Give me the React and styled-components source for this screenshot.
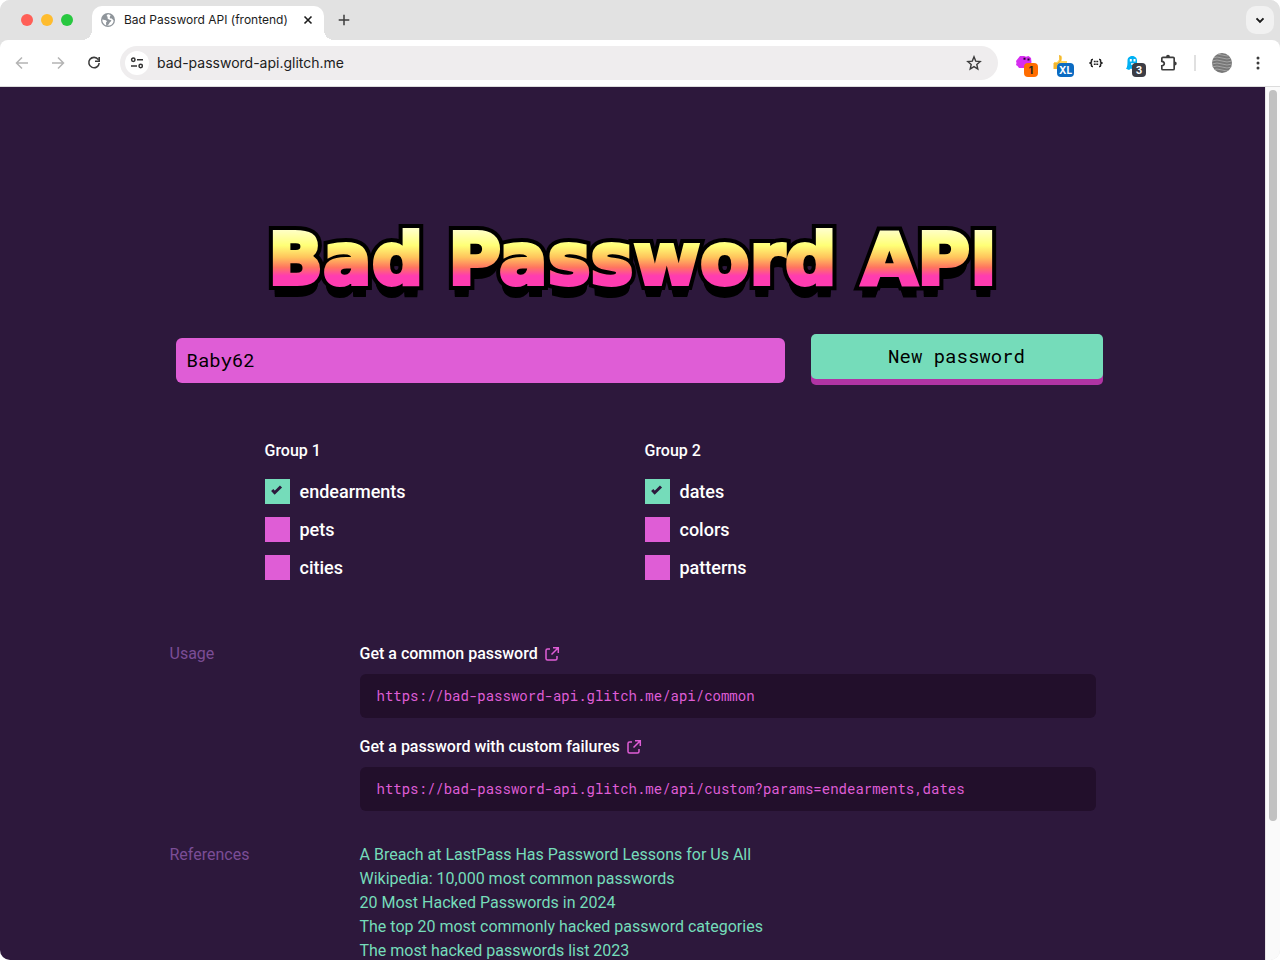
import React, { useState } from "react";
import styled, { createGlobalStyle } from "styled-components";

const color = {
  night: "#2d183c",
  pink: "#df5dd6",
  plum: "#b034a4",
  mint: "#75dcba",
  violet: "#7b4d96",
  code: "#220f2b",
};
const mono = '"Roboto Mono", "DejaVu Sans Mono", monospace';

const GlobalStyle = createGlobalStyle`
  * { box-sizing: border-box; }
  body { margin: 0; background: #fff; font-family: Roboto, sans-serif; }
  button, input { font: inherit; }
`;

const Window = styled.div`
  height: 100vh;
  display: flex;
  flex-direction: column;
  overflow: hidden;
  border-radius: 10px;
  background: #e2e2e2;
`;

const TabStrip = styled.div`
  height: 40px;
  flex: none;
  display: flex;
  align-items: center;
  padding: 0 6px 0 21px;
  background: #e2e2e2;
  font-family: Inter, sans-serif;
`;
const Lights = styled.div`
  display: flex;
  gap: 8px;
  margin-right: 19px;
`;
const Light = styled.span`
  width: 12px;
  height: 12px;
  border-radius: 50%;
  background: ${(p) => p.$tone};
`;
const Tab = styled.div`
  position: relative;
  align-self: flex-end;
  width: 232px;
  height: 34px;
  display: flex;
  align-items: center;
  padding: 0 8px 6px 9px;
  border-radius: 10px 10px 0 0;
  background: #fff;
  &::before,
  &::after {
    content: "";
    position: absolute;
    bottom: 0;
    width: 10px;
    height: 10px;
  }
  &::before {
    right: 100%;
    background: radial-gradient(circle at 0 0, transparent 10px, #fff 10px);
  }
  &::after {
    left: 100%;
    background: radial-gradient(circle at 100% 0, transparent 10px, #fff 10px);
  }
`;
const TabTitle = styled.span`
  flex: 1;
  margin-left: 9px;
  font-size: 12px;
  line-height: 16px;
  white-space: nowrap;
  color: #1c1c1c;
`;
const IconButton = styled.button`
  width: ${(p) => p.$w || 36}px;
  height: ${(p) => p.$h || 28}px;
  flex: none;
  display: grid;
  place-items: center;
  padding: 0;
  border: 0;
  border-radius: 10px;
  background: ${(p) => p.$bg || "transparent"};
  color: ${(p) => p.$ink || "#3c3c3c"};
`;
const Spacer = styled.div`
  flex: 1;
`;

const Toolbar = styled.div`
  height: 47px;
  flex: none;
  display: flex;
  align-items: center;
  padding: 0 4px;
  border-radius: 8px 8px 0 0;
  border-bottom: 1px solid #dcdcdc;
  background: #fff;
`;
const AddressBar = styled.div`
  flex: 1;
  min-width: 0;
  height: 34px;
  display: flex;
  align-items: center;
  margin: 0 8px;
  padding: 0 10px 0 5px;
  border-radius: 17px;
  background: #efedee;
`;
const SiteButton = styled(IconButton)`
  border-radius: 50%;
`;
const Address = styled.input`
  flex: 1;
  min-width: 0;
  margin-left: 8px;
  padding: 0;
  border: 0;
  outline: 0;
  background: none;
  font-family: Inter, sans-serif;
  font-size: 14px;
  line-height: 20px;
  color: #202020;
`;
const Extension = styled(IconButton)`
  position: relative;
`;
const Badge = styled.span`
  position: absolute;
  top: 14px;
  left: ${(p) => (p.$wide ? 15 : 18)}px;
  min-width: 14px;
  height: 14px;
  padding: 0 2px;
  border-radius: 4px;
  background: ${(p) => p.$bg};
  color: ${(p) => p.$ink || "#fff"};
  font-family: Inter, sans-serif;
  font-size: 10px;
  font-weight: 700;
  line-height: 14px;
  text-align: center;
`;
const Divider = styled.span`
  width: 2px;
  height: 16px;
  margin: 0 8px;
  background: #e0e0e0;
`;

const Viewport = styled.div`
  flex: 1;
  min-height: 0;
  display: flex;
`;
const Page = styled.div`
  flex: 1;
  min-width: 0;
  overflow: hidden;
  background: ${color.night};
  color: #fff;
`;
const ScrollTrack = styled.div`
  width: 15px;
  flex: none;
  padding: 3px 3px 0;
  border-left: 1px solid #e8e8e8;
  background: #fafafa;
`;
const ScrollThumb = styled.div`
  height: 84%;
  border-radius: 4px;
  background: #c1c1c1;
`;

const Main = styled.main`
  max-width: 926px;
  margin: 0 auto;
  padding-top: 130px;
`;
const Title = styled.h1`
  position: relative;
  z-index: 0;
  margin: 0;
  font-family: "DejaVu Sans", sans-serif;
  font-size: 72px;
  font-weight: 700;
  line-height: 84px;
  text-align: center;
  white-space: nowrap;
  &::before {
    content: attr(data-text);
    position: absolute;
    inset: 0;
    z-index: -1;
    color: #000;
    -webkit-text-stroke: 12px #000;
    text-shadow: 0 2px #000, 0 4px #000, 0 6px #000, 0 8px #000, 0 10px #000,
      0 12px #000, 0 13px #000;
  }
`;
const TitleFill = styled.span`
  background: linear-gradient(#ffffc4 16%, #ffff76 34%, #ffc45c 48%, #ff7560 60%, #ff3cb0 70%);
  -webkit-background-clip: text;
  background-clip: text;
  -webkit-text-stroke: 4px transparent;
  color: transparent;
`;

const Form = styled.form`
  display: grid;
  grid-template-columns: 609fr 292fr;
  column-gap: 26px;
  align-items: start;
  margin: 33px -7px 0 6px;
`;
const PasswordField = styled.input`
  min-width: 0;
  height: 45px;
  margin-top: 4px;
  padding: 0 11px 2px;
  border: 0;
  border-radius: 6px;
  background: ${color.pink};
  color: #000;
  font-family: ${mono};
  font-size: 19px;
`;
const NewButton = styled.button`
  height: 45px;
  padding: 0 0 2px;
  border: 0;
  border-radius: 5px;
  background: ${color.mint};
  box-shadow: 0 6px ${color.plum};
  color: #000;
  font-family: ${mono};
  font-size: 19px;
`;

const Groups = styled.div`
  display: grid;
  grid-template-columns: 1fr 1fr;
  margin: 56px 71px 0 95px;
`;
const Group = styled.fieldset`
  min-width: 0;
  display: flex;
  flex-direction: column;
  gap: 13px;
  margin: 0;
  padding: 0;
  border: 0;
`;
const Legend = styled.legend`
  margin-bottom: 16px;
  padding: 0;
  font-size: 16px;
  font-weight: 500;
  line-height: 24px;
`;
const Option = styled.label`
  display: flex;
  align-items: center;
  gap: 10px;
  font-size: 18px;
  font-weight: 500;
  line-height: 25px;
`;
const BoxWrap = styled.span`
  display: grid;
  > * {
    grid-area: 1 / 1;
  }
  svg {
    margin: 6px;
    pointer-events: none;
  }
`;
const Box = styled.input`
  appearance: none;
  width: 25px;
  height: 25px;
  margin: 0;
  background: ${color.pink};
  &:checked {
    background: ${color.mint};
  }
`;

const Section = styled.section`
  display: grid;
  grid-template-columns: 190px minmax(0, 1fr);
  margin-top: ${(p) => p.$top}px;
  font-size: 16px;
  line-height: 24px;
`;
const SectionTitle = styled.h2`
  margin: 0;
  font-size: 16px;
  font-weight: 400;
  color: ${color.violet};
`;
const Example = styled.div`
  & + & {
    margin-top: 17px;
  }
`;
const ExampleTitle = styled.h3`
  display: flex;
  align-items: center;
  gap: 6px;
  margin: 0;
  font-size: 16px;
  font-weight: 500;
  line-height: 24px;
`;
const OpenLink = styled.a`
  display: flex;
  color: ${color.pink};
`;
const Code = styled.code`
  display: block;
  margin-top: 8px;
  padding: 10px 17px;
  border-radius: 6px;
  background: ${color.code};
  color: ${color.pink};
  font-family: ${mono};
  font-size: 14px;
  line-height: 24px;
`;
const Links = styled.ul`
  margin: 0;
  padding: 0 0 32px;
  list-style: none;
`;
const RefLink = styled.a`
  color: ${color.mint};
  text-decoration: none;
`;

const Stroke = ({ d, size = 16, w = 2 }) => (
  <svg width={size} height={size} viewBox="0 0 16 16" fill="none" stroke="currentColor" strokeWidth={w} aria-hidden="true">
    <path d={d} />
  </svg>
);

const Globe = () => (
  <svg width="14" height="14" viewBox="0 0 14 14" aria-hidden="true">
    <circle cx="7" cy="7" r="7" fill="#8f959b" />
    <path d="M7.6 1.3C6 1.6 5.5 2.4 5.8 3.2 6.8 3.4 7 4.5 6.2 5.1L7.8 6.4 10.3 7.2C10.5 8.6 9.3 8.4 8.7 9.5L7.5 11.4 6 12.5C9.8 13.2 12.5 10.5 12.6 7.4L10.8 5.4 9.3 5.6 8.7 4.2 9.6 2.2ZM1.3 6.5L5 7.2 6 8.4 5 9.5 5.2 12.4C2.6 11.5 1.2 9.2 1.3 6.5Z" fill="#fff" />
  </svg>
);

const groups = [
  { title: "Group 1", options: ["endearments", "pets", "cities"] },
  { title: "Group 2", options: ["dates", "colors", "patterns"] },
];
const examples = [
  ["Get a common password", "https://bad-password-api.glitch.me/api/common"],
  ["Get a password with custom failures", "https://bad-password-api.glitch.me/api/custom?params=endearments,dates"],
];
const references = [
  "A Breach at LastPass Has Password Lessons for Us All",
  "Wikipedia: 10,000 most common passwords",
  "20 Most Hacked Passwords in 2024",
  "The top 20 most commonly hacked password categories",
  "The most hacked passwords list 2023",
];

function BrowserChrome() {
  return (
    <>
      <TabStrip>
        <Lights>
          <Light $tone="#ff5f57" />
          <Light $tone="#febc2e" />
          <Light $tone="#28c840" />
        </Lights>
        <Tab>
          <Globe />
          <TabTitle>Bad Password API (frontend)</TabTitle>
          <IconButton $w={16} $h={16} $ink="#1c1c1c" aria-label="Close tab">
            <Stroke d="M4.5 4.5l7 7m0-7l-7 7" w={1.6} />
          </IconButton>
        </Tab>
        <IconButton $w={40} aria-label="New tab">
          <Stroke d="M8 2.7v10.6M2.7 8h10.6" w={1.5} />
        </IconButton>
        <Spacer />
        <IconButton $w={28} $bg="#f1f1f1" $ink="#1c1c1c" aria-label="Search tabs">
          <Stroke d="M4.5 6.4L8 9.9l3.5-3.5" />
        </IconButton>
      </TabStrip>
      <Toolbar>
        <IconButton $ink="#b4b4b4" aria-label="Back">
          <Stroke d="M14 8H2.8M8 2.5L2.5 8 8 13.5" w={1.5} />
        </IconButton>
        <IconButton $ink="#b4b4b4" aria-label="Forward">
          <Stroke d="M2 8h11.2M8 2.5L13.5 8 8 13.5" w={1.5} />
        </IconButton>
        <IconButton aria-label="Reload">
          <Stroke d="M12.3 4.6A5.2 5.2 0 1 0 13.2 8M13.2 2v4.2H9" w={1.6} />
        </IconButton>
        <AddressBar>
          <SiteButton $w={24} $h={24} $bg="#fff" aria-label="Site information">
            <svg width="16" height="16" viewBox="0 0 16 16" fill="none" stroke="#333" strokeWidth="1.5" aria-hidden="true">
              <circle cx="4.3" cy="4.7" r="1.7" />
              <circle cx="11.7" cy="11" r="1.7" />
              <path d="M8 4.7h6M2 11h6" />
            </svg>
          </SiteButton>
          <Address aria-label="Address" defaultValue="bad-password-api.glitch.me" />
          <IconButton $w={28} aria-label="Bookmark">
            <Stroke d="M8 1.8l1.7 4.3 4.5.4-3.4 3 1 4.5L8 11.6l-3.8 2.4 1-4.5-3.4-3 4.5-.4z" w={1.4} />
          </IconButton>
        </AddressBar>
        <Extension aria-label="Extension, 1 item">
          <svg width="18" height="16" viewBox="0 0 18 16" aria-hidden="true">
            <path d="M3 3.5L5 1h4l2 .8L13.5 1l2.5 2 .5 4-2 6H4l-1.5-2L1 10l.5-2L1 6z" fill="#d62df0" />
            <path d="M8.5 2.8h2v2h-2zM12.5 3.6h2v2h-2z" fill="#27042d" />
          </svg>
          <Badge $bg="#ff6d00" $ink="#222">1</Badge>
        </Extension>
        <Extension aria-label="Thumbs up extension">
          <svg width="16" height="16" viewBox="0 0 16 16" aria-hidden="true">
            <path d="M2 7h3l2-2.2V.8h2.5l.7 2.2-.7 3H15v8H6l-1-1H2z" fill="#ffd45a" />
            <path d="M7 .8h1.2v5.4L5 9" fill="none" stroke="#e9aa28" />
            <path d="M1.5 8H5v6H1.5z" fill="#f4b52e" />
          </svg>
          <Badge $wide $bg="#0b6bc2">XL</Badge>
        </Extension>
        <IconButton aria-label="JSON viewer" $ink="#222">
          <svg width="14" height="10" viewBox="0 0 14 10" fill="none" stroke="currentColor" strokeWidth="1.5" aria-hidden="true">
            <path d="M4 1.5H3.2Q2.4 1.5 2.4 2.5V4L1 5l1.4 1V7.5Q2.4 8.5 3.2 8.5H4M10 1.5h.8q.8 0 .8 1V4L13 5l-1.4 1V7.5q0 1-.8 1H10" />
            <path d="M4.8 3.5h4.4M4.8 6.2h4.4" strokeDasharray="1.9 .6" />
          </svg>
        </IconButton>
        <Extension aria-label="Ghost extension, 3 items">
          <svg width="14" height="16" viewBox="0 0 14 16" aria-hidden="true">
            <path d="M2.5 5.5C2.5-.6 12-.6 12 5.5V14l-2-1-2 2-2-1.5L4 15l-3-1.2C2.3 12 2.5 10 2.5 5.5z" fill="#00b1f4" />
            <path d="M4.8 4h2v2.5h-2zM8.5 4h2v2.5h-2zM6 8.2h3v1.5H6z" fill="#fff" />
          </svg>
          <Badge $bg="#3c3d45">3</Badge>
        </Extension>
        <IconButton aria-label="Extensions">
          <Stroke size={18} w={1.5} d="M2.500 4Q2.500 3 3.500 3H12.500Q13.500 3 13.500 4V13Q13.500 14 12.500 14H3.500Q2.500 14 2.500 13V10.500Q4.700 10.200 4.700 8.500T2.500 6.500zM7 2.500a1 1 0 0 1 2 0M14 7.500a1 1 0 0 1 0 2" />
        </IconButton>
        <Divider />
        <IconButton aria-label="Profile">
          <svg width="20" height="20" viewBox="0 0 20 20" aria-hidden="true">
            <defs>
              <clipPath id="avatar"><circle cx="10" cy="10" r="10" /></clipPath>
            </defs>
            <g clipPath="url(#avatar)">
              <path d="M0 0h20v20H0z" fill="#777" />
              <path d="M0 2q5-2 10 0t10 0M0 5q5-2 10 0t10 0M0 8q5-2 10 0t10 0M0 11q5-2 10 0t10 0M0 14q5-2 10 0t10 0M0 17q5-2 10 0t10 0" fill="none" stroke="#a4a4a4" />
            </g>
          </svg>
        </IconButton>
        <IconButton aria-label="Menu">
          <svg width="4" height="14" viewBox="0 0 4 14" fill="currentColor" aria-hidden="true">
            <circle cx="2" cy="2" r="1.5" />
            <circle cx="2" cy="7" r="1.5" />
            <circle cx="2" cy="12" r="1.5" />
          </svg>
        </IconButton>
      </Toolbar>
    </>
  );
}

export default function App() {
  const [checked, setChecked] = useState({ endearments: true, dates: true });
  const toggle = (name) => setChecked((c) => ({ ...c, [name]: !c[name] }));

  return (
    <Window>
      <GlobalStyle />
      <BrowserChrome />
      <Viewport>
        <Page>
          <Main>
            <Title data-text="Bad Password API">
              <TitleFill>Bad Password API</TitleFill>
            </Title>
            <Form onSubmit={(e) => e.preventDefault()}>
              <PasswordField aria-label="Password" defaultValue="Baby62" />
              <NewButton type="submit">New password</NewButton>
            </Form>
            <Groups>
              {groups.map((group) => (
                <Group key={group.title}>
                  <Legend>{group.title}</Legend>
                  {group.options.map((name) => (
                    <Option key={name}>
                      <BoxWrap>
                        <Box type="checkbox" checked={!!checked[name]} onChange={() => toggle(name)} />
                        {checked[name] && (
                          <svg width="12" height="12" viewBox="0 0 12 12" fill="none" stroke={color.night} strokeWidth="3" aria-hidden="true">
                            <path d="M1.2 5l2.5 2.7L10 1.5" />
                          </svg>
                        )}
                      </BoxWrap>
                      {name}
                    </Option>
                  ))}
                </Group>
              ))}
            </Groups>
            <Section $top={62}>
              <SectionTitle>Usage</SectionTitle>
              <div>
                {examples.map(([title, url]) => (
                  <Example key={title}>
                    <ExampleTitle>
                      {title}
                      <OpenLink href={url} aria-label={`Open: ${title}`}>
                        <Stroke d="M6 3H3.5Q2 3 2 4.5V12.5Q2 14 3.5 14H11.5Q13 14 13 12.5V10M9 1.8h5.3v5.3M14 2L7.5 8.5" w={1.5} />
                      </OpenLink>
                    </ExampleTitle>
                    <Code>{url}</Code>
                  </Example>
                ))}
              </div>
            </Section>
            <Section $top={32}>
              <SectionTitle>References</SectionTitle>
              <Links>
                {references.map((text) => (
                  <li key={text}>
                    <RefLink href="#">{text}</RefLink>
                  </li>
                ))}
              </Links>
            </Section>
          </Main>
        </Page>
        <ScrollTrack>
          <ScrollThumb />
        </ScrollTrack>
      </Viewport>
    </Window>
  );
}
